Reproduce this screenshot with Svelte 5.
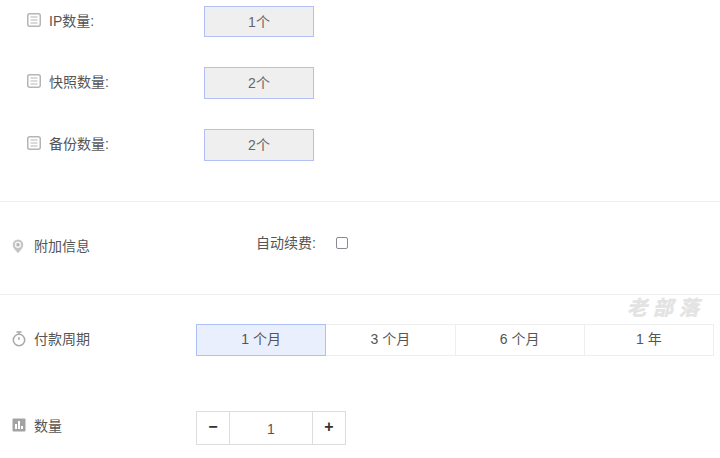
<script>
	const specs = [
		{ label: 'IP数量:', value: '1个' },
		{ label: '快照数量:', value: '2个' },
		{ label: '备份数量:', value: '2个' }
	];
	const periods = ['1 个月', '3 个月', '6 个月', '1 年'];
</script>

<div class="page">
	<section class="specs">
		{#each specs as spec}
			<div class="spec">
				<svg class="doc" width="14" height="14" viewBox="0 0 14 14" aria-hidden="true">
					<rect x="0.75" y="0.75" width="12.5" height="12.5" rx="2" fill="none" stroke="#b5b5b5" stroke-width="1.5" />
					<path d="M3.5 4h7M3.5 7h7M3.5 10h7" stroke="#b5b5b5" stroke-width="1.2" />
				</svg>
				<span class="spec-label">{spec.label}</span>
				<div class="spec-value">{spec.value}</div>
			</div>
		{/each}
	</section>

	<section class="extra">
		<div class="title">
			<svg width="12" height="15" viewBox="0 0 12 15" aria-hidden="true">
				<path d="M6 0.5a5.3 5.3 0 0 1 5.3 5.3c0 3-2.6 5.4-5.3 8.4C3.3 11.2 0.7 8.8 0.7 5.8A5.3 5.3 0 0 1 6 0.5z" fill="#c4c4c4" />
				<circle cx="6" cy="5.8" r="3.2" fill="#f4f4f4" />
				<circle cx="6" cy="5.8" r="1.7" fill="#b5b5b5" />
			</svg>
			<span>附加信息</span>
		</div>
		<div class="renew">
			<span>自动续费:</span>
			<span class="check"></span>
		</div>
	</section>

	<section class="period">
		<div class="title">
			<svg width="14" height="16" viewBox="0 0 14 16" aria-hidden="true">
				<circle cx="7" cy="9" r="5.7" fill="none" stroke="#a8a8a8" stroke-width="1.5" />
				<path d="M4.5 1h5M7 1v2.5M7 6v3" stroke="#a8a8a8" stroke-width="1.4" fill="none" />
			</svg>
			<span>付款周期</span>
		</div>
		<div class="tabs">
			{#each periods as period, i}
				<div class="tab" class:active={i === 0}>{period}</div>
			{/each}
		</div>
		<div class="mark">老部落</div>
	</section>

	<section class="qty">
		<div class="title">
			<svg width="14" height="14" viewBox="0 0 14 14" aria-hidden="true">
				<rect width="13" height="13" x="0.5" y="0.5" rx="1" fill="#a3a3a3" />
				<path d="M3 6h2v5H3zM6 3h2v8H6zM9 8h2v3H9z" fill="#fff" />
			</svg>
			<span>数量</span>
		</div>
		<div class="stepper">
			<div class="step">−</div>
			<div class="num">1</div>
			<div class="step">+</div>
		</div>
	</section>
</div>

<style>
	:global(body) {
		margin: 0;
		background: #fff;
	}
	.page {
		width: 720px;
		height: 458px;
		overflow: hidden;
		font-family: "Liberation Sans", "Noto Sans CJK SC", sans-serif;
		font-size: 14px;
		color: #555;
	}
	.specs {
		display: flex;
		flex-direction: column;
		gap: 30px;
		height: 195px;
		padding: 6px 0 0 27px;
		border-bottom: 1px solid #eee;
	}
	.spec {
		display: flex;
		height: 32px;
	}
	.spec:first-child {
		height: 31px;
	}
	.doc {
		margin-top: 7px;
	}
	.spec-label {
		width: 155px;
		margin-left: 8px;
		margin-top: 6px;
		line-height: 18px;
	}
	.spec-value {
		box-sizing: border-box;
		width: 110px;
		height: 100%;
		background: #efefef;
		border: 1px solid #b4c0f5;
		color: #666;
		line-height: 31px;
		text-align: center;
	}
	.title {
		display: flex;
		align-items: center;
		gap: 8px;
		box-sizing: border-box;
		flex: none;
		width: 196px;
		padding-left: 12px;
	}
	.extra {
		display: flex;
		height: 92px;
		border-bottom: 1px solid #eee;
	}
	.extra .title {
		gap: 10px;
		height: 18px;
		margin-top: 35px;
	}
	.extra .title span,
	.period .title span {
		margin-bottom: 2px;
	}
	.renew {
		display: flex;
		align-items: center;
		gap: 20px;
		height: 18px;
		margin: 31px 0 0 60px;
	}
	.check {
		box-sizing: border-box;
		width: 12px;
		height: 12px;
		margin-top: 1px;
		border: 1.5px solid #8a8a92;
		border-radius: 2px;
	}
	.period {
		position: relative;
		display: flex;
		height: 55px;
		padding-top: 29px;
	}
	.period .title {
		height: 29px;
	}
	.tabs {
		display: flex;
		width: 518px;
		height: 32px;
	}
	.tab {
		box-sizing: border-box;
		flex: 1;
		border: 1px solid #eee;
		border-left: 0;
		color: #555;
		line-height: 29px;
		text-align: center;
	}
	.tab.active {
		background: #e9effd;
		border: 1px solid #adc0f8;
	}
	.mark {
		position: absolute;
		top: 2px;
		left: 627px;
		color: #e3e3e3;
		font-size: 20px;
		font-weight: bold;
		font-style: italic;
		letter-spacing: 6px;
		line-height: 22px;
		-webkit-text-stroke: 0.5px #e3e3e3;
	}
	.qty {
		display: flex;
		align-items: center;
		height: 34px;
		margin-top: 32px;
	}
	.qty .title {
		height: 28px;
		margin-bottom: 6px;
	}
	.stepper {
		display: flex;
		box-sizing: border-box;
		width: 150px;
		height: 34px;
		border: 1px solid #ddd;
	}
	.step {
		width: 32px;
		color: #333;
		font-size: 16px;
		font-weight: bold;
		line-height: 30px;
		text-align: center;
	}
	.num {
		flex: 1;
		border: solid #ddd;
		border-width: 0 1px;
		line-height: 34px;
		text-align: center;
	}
</style>
